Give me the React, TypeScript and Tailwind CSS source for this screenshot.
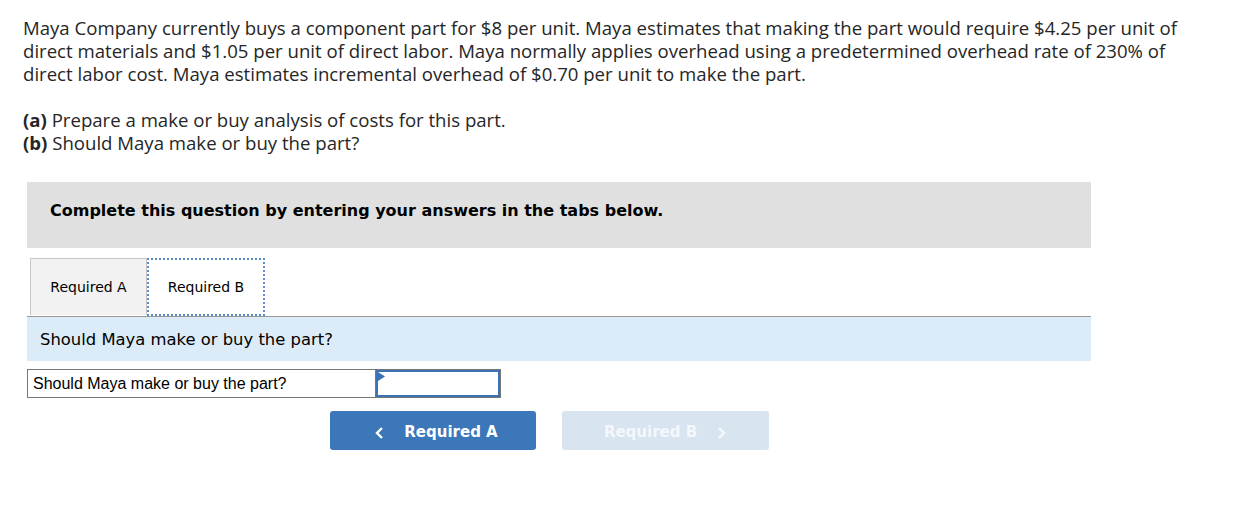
const intro = [
  "Maya Company currently buys a component part for $8 per unit. Maya estimates that making the part would require $4.25 per unit of",
  "direct materials and $1.05 per unit of direct labor. Maya normally applies overhead using a predetermined overhead rate of 230% of",
  "direct labor cost. Maya estimates incremental overhead of $0.70 per unit to make the part.",
];

export default function App() {
  return (
    <div className="min-h-[515px] w-[1252px] bg-white pt-[16px] text-[#262626]">
      <div className="pl-[23px] font-['Open_Sans',sans-serif] text-[18.6px] leading-[23px]">
        {intro.map((line) => (
          <div key={line} className="whitespace-nowrap">
            {line}
          </div>
        ))}
        <div className="mt-[23px]">
          <div>
            <span className="font-bold">(a)</span> Prepare a make or buy analysis of costs for this part.
          </div>
          <div>
            <span className="font-bold">(b)</span> Should Maya make or buy the part?
          </div>
        </div>
      </div>

      <div className="ml-[27px] mt-[28px] w-[1064px]">
        <div className="flex h-[66px] items-center bg-[#e0e0e0] pl-[23px] pb-[8px] font-['DejaVu_Sans',sans-serif] text-[16px] font-bold text-black">
          Complete this question by entering your answers in the tabs below.
        </div>

        <div className="mt-[10px] flex border-b border-[#999] pl-[3px] font-['DejaVu_Sans',sans-serif] text-[14px] text-black">
          <div className="flex h-[57px] w-[117px] items-center justify-center border border-b-0 border-[#c6c6c6] bg-[#f2f2f2]">
            Required A
          </div>
          <div className="flex h-[58px] w-[118px] items-center justify-center border-2 border-dotted border-[#5b8ccc] bg-white">
            Required B
          </div>
        </div>

        <div className="flex h-[44px] items-center bg-[#dcebf8] pl-[13px] pt-[3px] font-['DejaVu_Sans',sans-serif] text-[16.4px] text-black">
          Should Maya make or buy the part?
        </div>

        <div className="mt-[8px] flex h-[29px] w-[474px] border border-[#767676] font-['Liberation_Sans',sans-serif] text-[16px] text-black">
          <div className="flex w-[348px] items-center border-r border-[#767676] pl-[5px]">
            Should Maya make or buy the part?
          </div>
          <div className="relative flex-1 border-2 border-[#3b73b6]">
            <svg className="absolute left-0 top-0" width="7" height="9" viewBox="0 0 7 9">
              <polygon points="0,0 7,4.5 0,9" fill="#3b73b6" />
            </svg>
          </div>
        </div>

        <div className="mt-[13px] flex gap-[26px] pl-[303px] font-['DejaVu_Sans',sans-serif] text-[15px] font-bold text-white">
          <button className="flex h-[39px] w-[206px] items-center justify-center gap-[20px] rounded-[3px] bg-[#3b77b9] pl-[6px] pt-[4px]">
            <svg width="10" height="14" viewBox="0 0 10 14">
              <polyline points="8,2 3,7 8,12" fill="none" stroke="white" strokeWidth="2.4" />
            </svg>
            Required A
          </button>
          <button className="flex h-[39px] w-[207px] items-center justify-center gap-[20px] rounded-[3px] bg-[#d8e4f0] pt-[4px] text-[#f4f8fc]">
            Required B
            <svg width="10" height="14" viewBox="0 0 10 14">
              <polyline points="2,2 7,7 2,12" fill="none" stroke="#f4f8fc" strokeWidth="2.4" />
            </svg>
          </button>
        </div>
      </div>
    </div>
  );
}
